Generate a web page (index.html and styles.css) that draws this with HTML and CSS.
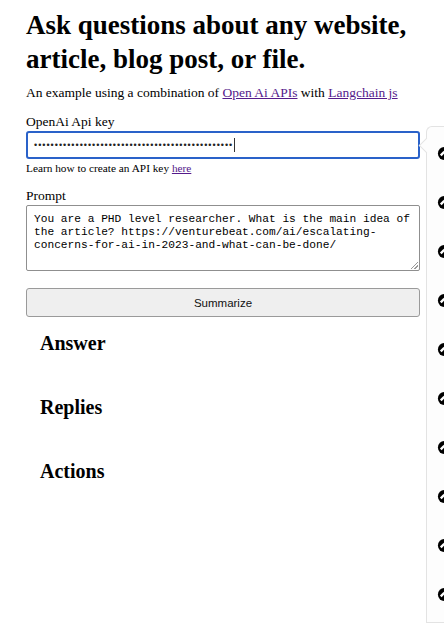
FILE: index.html
```html
<!DOCTYPE html>
<html>
<head>
<meta charset="utf-8">
<link rel="stylesheet" href="styles.css">
</head>
<body>
<div class="page">
  <h1 class="title">Ask questions about any website, article, blog post, or file.</h1>
  <p class="intro">An example using a combination of <a href="#">Open Ai APIs</a> with <a href="#">Langchain js</a></p>
  <label class="label">OpenAi Api key</label>
  <div class="input">••••••••••••••••••••••••••••••••••••••••••••••••<span class="caret"></span></div>
  <p class="hint">Learn how to create an API key <a href="#">here</a></p>
  <label class="label prompt-label">Prompt</label>
  <div class="textarea">You are a PHD level researcher. What is the main idea of the article? https://venturebeat.com/ai/escalating-concerns-for-ai-in-2023-and-what-can-be-done/<span class="grip"></span></div>
  <div class="button">Summarize</div>
  <div class="sections">
    <h2 class="section">Answer</h2>
    <h2 class="section">Replies</h2>
    <h2 class="section">Actions</h2>
  </div>
</div>
<div class="panel">
  <div class="arrow"></div>
  <div class="icons">
    <svg class="icon" viewBox="0 0 16 16"><circle cx="8" cy="8" r="7" fill="#000"/><path d="M4 10 L8 6" stroke="#fff" stroke-width="2.5"/></svg>
    <svg class="icon" viewBox="0 0 16 16"><circle cx="8" cy="8" r="7" fill="#000"/><path d="M4 10 L8 6" stroke="#fff" stroke-width="2.5"/></svg>
    <svg class="icon" viewBox="0 0 16 16"><circle cx="8" cy="8" r="7" fill="#000"/><path d="M4 10 L8 6" stroke="#fff" stroke-width="2.5"/></svg>
    <svg class="icon" viewBox="0 0 16 16"><circle cx="8" cy="8" r="7" fill="#000"/><path d="M4 10 L8 6" stroke="#fff" stroke-width="2.5"/></svg>
    <svg class="icon" viewBox="0 0 16 16"><circle cx="8" cy="8" r="7" fill="#000"/><path d="M4 10 L8 6" stroke="#fff" stroke-width="2.5"/></svg>
    <svg class="icon" viewBox="0 0 16 16"><circle cx="8" cy="8" r="7" fill="#000"/><path d="M4 10 L8 6" stroke="#fff" stroke-width="2.5"/></svg>
    <svg class="icon" viewBox="0 0 16 16"><circle cx="8" cy="8" r="7" fill="#000"/><path d="M4 10 L8 6" stroke="#fff" stroke-width="2.5"/></svg>
    <svg class="icon" viewBox="0 0 16 16"><circle cx="8" cy="8" r="7" fill="#000"/><path d="M4 10 L8 6" stroke="#fff" stroke-width="2.5"/></svg>
    <svg class="icon" viewBox="0 0 16 16"><circle cx="8" cy="8" r="7" fill="#000"/><path d="M4 10 L8 6" stroke="#fff" stroke-width="2.5"/></svg>
    <svg class="icon" viewBox="0 0 16 16"><circle cx="8" cy="8" r="7" fill="#000"/><path d="M4 10 L8 6" stroke="#fff" stroke-width="2.5"/></svg>
  </div>
</div>
</body>
</html>
```
FILE: styles.css
```css
html, body {
  margin: 0;
  padding: 0;
  background: #fff;
  width: 444px;
  height: 640px;
  overflow: hidden;
}
body {
  font-family: "Liberation Serif", "Times New Roman", serif;
  color: #000;
  position: relative;
}
.page {
  padding: 8px 24px 0 26px;
  display: flex;
  flex-direction: column;
}
.title {
  margin: 0;
  font-size: 27px;
  line-height: 34px;
  font-weight: bold;
}
.intro {
  margin: 8px 0 0;
  font-size: 13.5px;
  line-height: 18px;
}
a {
  color: #551a8b;
  text-decoration: underline;
}
.label {
  display: block;
  margin-top: 12px;
  font-size: 13.5px;
  line-height: 16px;
}
.input {
  margin-top: 1px;
  height: 28px;
  box-sizing: border-box;
  border: 2px solid #2a62c9;
  border-radius: 3px;
  padding: 0 6px;
  display: flex;
  align-items: center;
  font-family: "Liberation Sans", Arial, sans-serif;
  font-size: 9px;
  letter-spacing: 1px;
  color: #222;
  overflow: hidden;
  white-space: nowrap;
}
.caret {
  display: inline-block;
  width: 1px;
  height: 14px;
  background: #333;
  margin-left: 1px;
}
.hint {
  margin: 2px 0 0;
  font-size: 11.3px;
  line-height: 14px;
}
.prompt-label {
  margin-top: 13px;
}
.textarea {
  position: relative;
  margin-top: 1px;
  height: 66px;
  box-sizing: border-box;
  border: 1px solid #8f8f8f;
  border-radius: 2px;
  padding: 7px 6px 5px 7px;
  font-family: "Liberation Mono", "Courier New", monospace;
  font-size: 11.2px;
  line-height: 13px;
  color: #000;
}
.grip {
  position: absolute;
  right: 1px;
  bottom: 1px;
  width: 7px;
  height: 7px;
  background: linear-gradient(135deg, transparent 45%, #999 45%, #999 55%, transparent 55%, transparent 70%, #999 70%, #999 80%, transparent 80%);
}
.button {
  margin-top: 17px;
  height: 29px;
  box-sizing: border-box;
  border: 1px solid #9a9a9a;
  border-radius: 3px;
  background: #efefef;
  display: flex;
  align-items: center;
  justify-content: center;
  font-family: "Liberation Sans", Arial, sans-serif;
  font-size: 11.5px;
  color: #111;
}
.sections {
  padding: 0 0 0 14px;
  display: flex;
  flex-direction: column;
  gap: 40px;
  margin-top: 14px;
}
.section {
  margin: 0;
  font-size: 20px;
  line-height: 24px;
  font-weight: bold;
}
.panel {
  position: absolute;
  left: 426px;
  top: 126px;
  width: 40px;
  height: 497px;
  box-sizing: border-box;
  border-left: 1px solid #e3e3e3;
  border-top: 1px solid #e3e3e3;
  border-bottom: 1px solid #e3e3e3;
  border-top-left-radius: 6px;
  background: #fdfdfd;
}
.arrow {
  position: absolute;
  left: -6px;
  top: 13px;
  width: 10px;
  height: 10px;
  background: #fdfdfd;
  border-left: 1px solid #e3e3e3;
  border-bottom: 1px solid #e3e3e3;
  transform: rotate(45deg);
}
.icons {
  display: flex;
  flex-direction: column;
  gap: 34px;
  padding: 19px 0 0 10px;
}
.icon {
  width: 15px;
  height: 15px;
  display: block;
}
```
